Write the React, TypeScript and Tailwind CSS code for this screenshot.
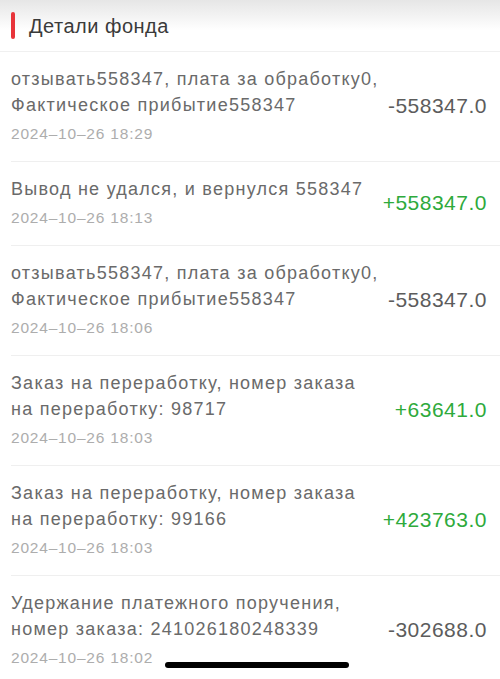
import React from "react";

type Record = {
  lines: string[];
  date: string;
  amount: string;
  positive: boolean;
};

const records: Record[] = [
  {
    lines: ["отзывать558347, плата за обработку0,", "Фактическое прибытие558347"],
    date: "2024–10–26 18:29",
    amount: "-558347.0",
    positive: false,
  },
  {
    lines: ["Вывод не удался, и вернулся 558347"],
    date: "2024–10–26 18:13",
    amount: "+558347.0",
    positive: true,
  },
  {
    lines: ["отзывать558347, плата за обработку0,", "Фактическое прибытие558347"],
    date: "2024–10–26 18:06",
    amount: "-558347.0",
    positive: false,
  },
  {
    lines: ["Заказ на переработку, номер заказа", "на переработку: 98717"],
    date: "2024–10–26 18:03",
    amount: "+63641.0",
    positive: true,
  },
  {
    lines: ["Заказ на переработку, номер заказа", "на переработку: 99166"],
    date: "2024–10–26 18:03",
    amount: "+423763.0",
    positive: true,
  },
  {
    lines: ["Удержание платежного поручения,", "номер заказа: 241026180248339"],
    date: "2024–10–26 18:02",
    amount: "-302688.0",
    positive: false,
  },
];

export default function App() {
  return (
    <div
      className="relative w-[500px] h-[679px] overflow-hidden bg-white"
      style={{ fontFamily: '"Liberation Sans", Arial, sans-serif' }}
    >
      <header className="h-[52px] flex items-center pl-[11px] bg-gradient-to-b from-[#e6e6e6] to-white to-[60%] border-b border-[#f0f0f0]">
        <span className="w-[4px] h-[27px] rounded-sm bg-[#e8343a]" />
        <h1 className="ml-[14px] text-[20px] tracking-[0.5px] text-[#3a3a3a]">Детали фонда</h1>
      </header>

      <ul className="pl-[11px]">
        {records.map((r, i) => (
          <li key={i} className="flex items-center border-b border-[#efefef] pr-[13px] pt-[14px] pb-[15px]">
            <div className="flex-1">
              {r.lines.map((l, j) => (
                <p key={j} className="text-[18px] leading-[26px] tracking-[1.25px] text-[#6a6a6a]">
                  {l}
                </p>
              ))}
              <p className="mt-[4px] text-[15.5px] leading-[24px] tracking-[0.8px] text-[#adadad]">{r.date}</p>
            </div>
            <span
              className={`text-[21px] tracking-[0.5px] ${r.positive ? "text-[#2eaa3c]" : "text-[#5c5c5c]"}`}
            >
              {r.amount}
            </span>
          </li>
        ))}
      </ul>

      <div className="absolute left-[165px] top-[662px] w-[184px] h-[6px] rounded-full bg-black" />
    </div>
  );
}
